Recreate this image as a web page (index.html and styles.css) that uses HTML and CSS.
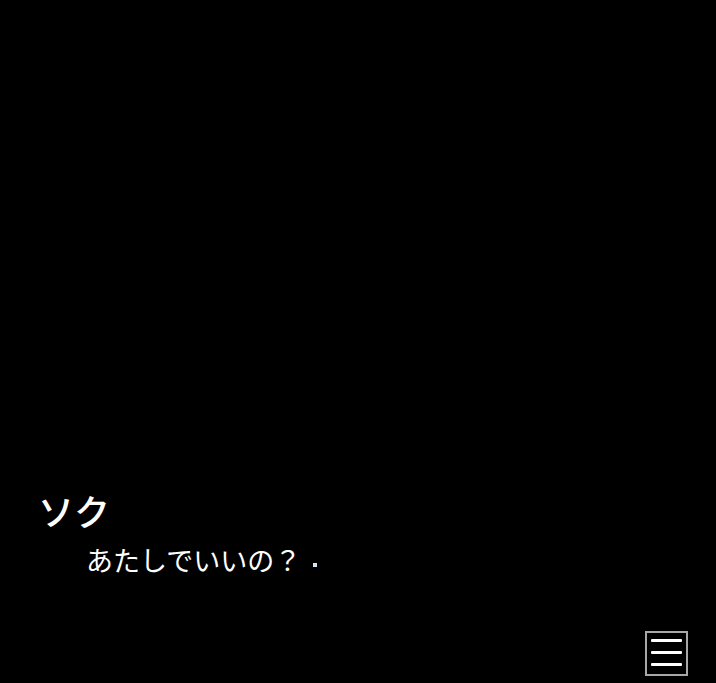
FILE: index.html
```html
<!DOCTYPE html>
<html lang="ja">
<head>
<meta charset="utf-8">
<link rel="stylesheet" href="styles.css">
</head>
<body>
<div class="screen">
  <div class="dialog">
    <div class="name">ソク</div>
    <div class="line">あたしでいいの？<span class="cursor"></span></div>
  </div>
  <button class="menu" aria-label="menu">
    <span class="bar"></span>
    <span class="bar"></span>
    <span class="bar"></span>
  </button>
</div>
</body>
</html>
```
FILE: styles.css
```css
html, body {
  margin: 0;
  padding: 0;
  background: #000;
}
.screen {
  position: relative;
  width: 716px;
  height: 683px;
  background: #000;
  display: flex;
  flex-direction: column;
  justify-content: flex-start;
  font-family: "Noto Sans CJK JP", "Noto Sans", sans-serif;
  color: #fff;
}
.dialog {
  margin-top: 486px;
  padding-left: 38px;
  display: flex;
  flex-direction: column;
}
.name {
  font-size: 36px;
  line-height: 48px;
  font-weight: 500;
  letter-spacing: 0;
}
.line {
  margin-top: 8px;
  padding-left: 48px;
  font-size: 27px;
  line-height: 36px;
  letter-spacing: 0;
  display: flex;
  align-items: center;
}
.cursor {
  display: inline-block;
  width: 4px;
  height: 4px;
  background: #cfe6f2;
  margin-left: 12px;
  margin-top: 10px;
}
.menu {
  position: absolute;
  left: 645px;
  top: 631px;
  width: 43px;
  height: 45px;
  box-sizing: border-box;
  border: 2px solid #a8a8a8;
  background: #000;
  padding: 6px 4px 8px;
  display: flex;
  flex-direction: column;
  justify-content: space-between;
  align-items: center;
}
.bar {
  display: block;
  width: 31px;
  height: 3px;
  background: #fff;
  border-radius: 1px;
}
```
